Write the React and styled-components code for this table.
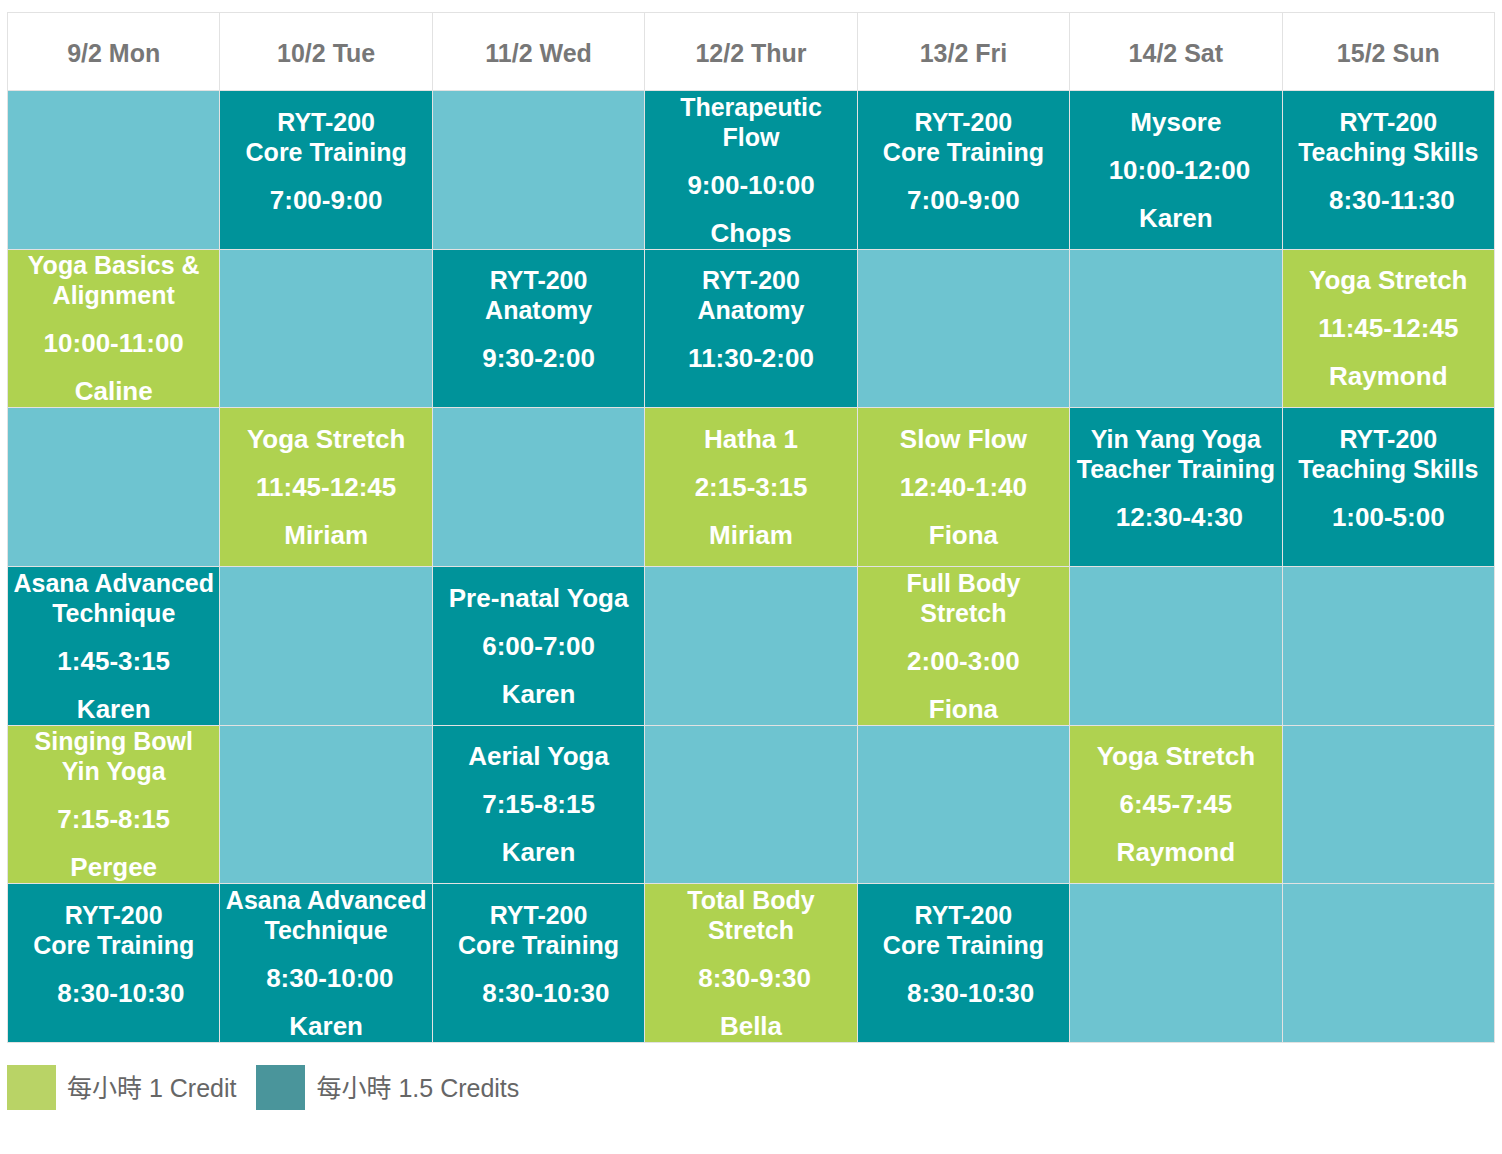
import styled, { createGlobalStyle } from "styled-components";

const GlobalStyle = createGlobalStyle`
    body {
        margin: 0;
        background: #fff;
        font-family: "Liberation Sans", Arial, sans-serif;
    }
`;

const days = ["9/2 Mon", "10/2 Tue", "11/2 Wed", "12/2 Thur", "13/2 Fri", "14/2 Sat", "15/2 Sun"];

const N = "\u00a0";

// kind: "e" = empty, "t" = teal (1.5 credits), "g" = green (1 credit)
const E = { kind: "e" };
const rows = [
    [
        E,
        { kind: "t", title: ["RYT-200", "Core Training"], time: "7:00-9:00" },
        E,
        { kind: "t", title: ["Therapeutic", "Flow"], time: "9:00-10:00", name: "Chops" },
        { kind: "t", title: ["RYT-200", "Core Training"], time: "7:00-9:00" },
        { kind: "t", title: ["Mysore"], time: N + "10:00-12:00", name: "Karen" },
        { kind: "t", title: ["RYT-200", "Teaching Skills"], time: N + "8:30-11:30" },
    ],
    [
        { kind: "g", title: ["Yoga Basics &", "Alignment"], time: "10:00-11:00", name: "Caline" },
        E,
        { kind: "t", title: ["RYT-200", "Anatomy"], time: "9:30-2:00" },
        { kind: "t", title: ["RYT-200", "Anatomy"], time: "11:30-2:00" },
        E,
        E,
        { kind: "g", title: ["Yoga Stretch"], time: "11:45-12:45", name: "Raymond" },
    ],
    [
        E,
        { kind: "g", title: ["Yoga Stretch"], time: "11:45-12:45", name: "Miriam" },
        E,
        { kind: "g", title: ["Hatha 1"], time: "2:15-3:15", name: "Miriam" },
        { kind: "g", title: ["Slow Flow"], time: "12:40-1:40", name: "Fiona" },
        { kind: "t", title: ["Yin Yang Yoga", "Teacher Training"], time: N + "12:30-4:30" },
        { kind: "t", title: ["RYT-200", "Teaching Skills"], time: "1:00-5:00" },
    ],
    [
        { kind: "t", title: ["Asana Advanced", "Technique"], time: "1:45-3:15", name: "Karen" },
        E,
        { kind: "t", title: ["Pre-natal Yoga"], time: "6:00-7:00", name: "Karen" },
        E,
        { kind: "g", title: ["Full Body", "Stretch"], time: "2:00-3:00", name: "Fiona" },
        E,
        E,
    ],
    [
        { kind: "g", title: ["Singing Bowl", "Yin Yoga"], time: "7:15-8:15", name: "Pergee" },
        E,
        { kind: "t", title: ["Aerial Yoga"], time: "7:15-8:15", name: "Karen" },
        E,
        E,
        { kind: "g", title: ["Yoga Stretch"], time: "6:45-7:45", name: "Raymond" },
        E,
    ],
    [
        { kind: "t", title: ["RYT-200", "Core Training"], time: N + N + "8:30-10:30" },
        { kind: "t", title: ["Asana Advanced", "Technique"], time: N + "8:30-10:00", name: "Karen" },
        { kind: "t", title: ["RYT-200", "Core Training"], time: N + N + "8:30-10:30" },
        { kind: "g", title: ["Total Body", "Stretch"], time: N + "8:30-9:30", name: "Bella" },
        { kind: "t", title: ["RYT-200", "Core Training"], time: N + N + "8:30-10:30" },
        E,
        E,
    ],
];

export default function App() {
    return (
        <Page>
            <GlobalStyle />
            <Schedule>
                {days.map((d) => (
                    <DayHead key={d}>{d}</DayHead>
                ))}
                {rows.map((row, r) =>
                    row.map((c, i) => (
                        <Slot key={r + "-" + i} $kind={c.kind} $noName={c.kind !== "e" && !c.name}>
                            {c.title && (
                                <Title $two={c.title.length > 1}>
                                    {c.title.map((t) => (
                                        <div key={t}>{t}</div>
                                    ))}
                                </Title>
                            )}
                            {c.time && <Line>{c.time}</Line>}
                            {c.name && <Line>{c.name}</Line>}
                        </Slot>
                    ))
                )}
            </Schedule>

            <Legend>
                <Swatch $color="#b9d366" />
                <LegendText>每小時 1 Credit</LegendText>
                <Swatch $color="#4a959b" />
                <LegendText>每小時 1.5 Credits</LegendText>
            </Legend>
        </Page>
    );
}

const colors = {
    e: "#6ec4d0",
    t: "#00939a",
    g: "#afd250",
};

const Page = styled.div`
    padding: 12px 0 40px 7px;
`;

const Schedule = styled.div`
    width: 1488px;
    box-sizing: border-box;
    display: grid;
    grid-template-columns: repeat(7, 1fr);
    grid-template-rows: 77px repeat(6, 157.67px);
    gap: 1px;
    background: #e2e2e2;
    border: 1px solid #e2e2e2;
`;

const DayHead = styled.div`
    background: #fff;
    display: flex;
    align-items: center;
    justify-content: center;
    color: #777;
    font-size: 25px;
    font-weight: bold;
    padding-top: 3px;
`;

const Slot = styled.div`
    background: ${(p) => colors[p.$kind]};
    display: flex;
    flex-direction: column;
    align-items: center;
    justify-content: center;
    gap: 18px;
    padding: 0 2px ${(p) => (p.$noName ? "18px" : "0")};
    color: #fff;
    font-weight: bold;
    text-align: center;
    overflow: hidden;
    white-space: nowrap;
`;

const Title = styled.div`
    font-size: ${(p) => (p.$two ? "25px" : "26px")};
    line-height: 30px;
`;

const Line = styled.div`
    font-size: 26px;
    line-height: 30px;
`;

const Legend = styled.div`
    display: flex;
    align-items: center;
    margin-top: 22px;
`;

const Swatch = styled.div`
    width: 49px;
    height: 45px;
    background: ${(p) => p.$color};
    margin-right: 11px;
`;

const LegendText = styled.span`
    font-family: "Liberation Sans", "Noto Sans CJK TC", sans-serif;
    font-size: 25px;
    line-height: 30px;
    color: #666;
    margin-right: 20px;
    padding-top: 2px;
`;
